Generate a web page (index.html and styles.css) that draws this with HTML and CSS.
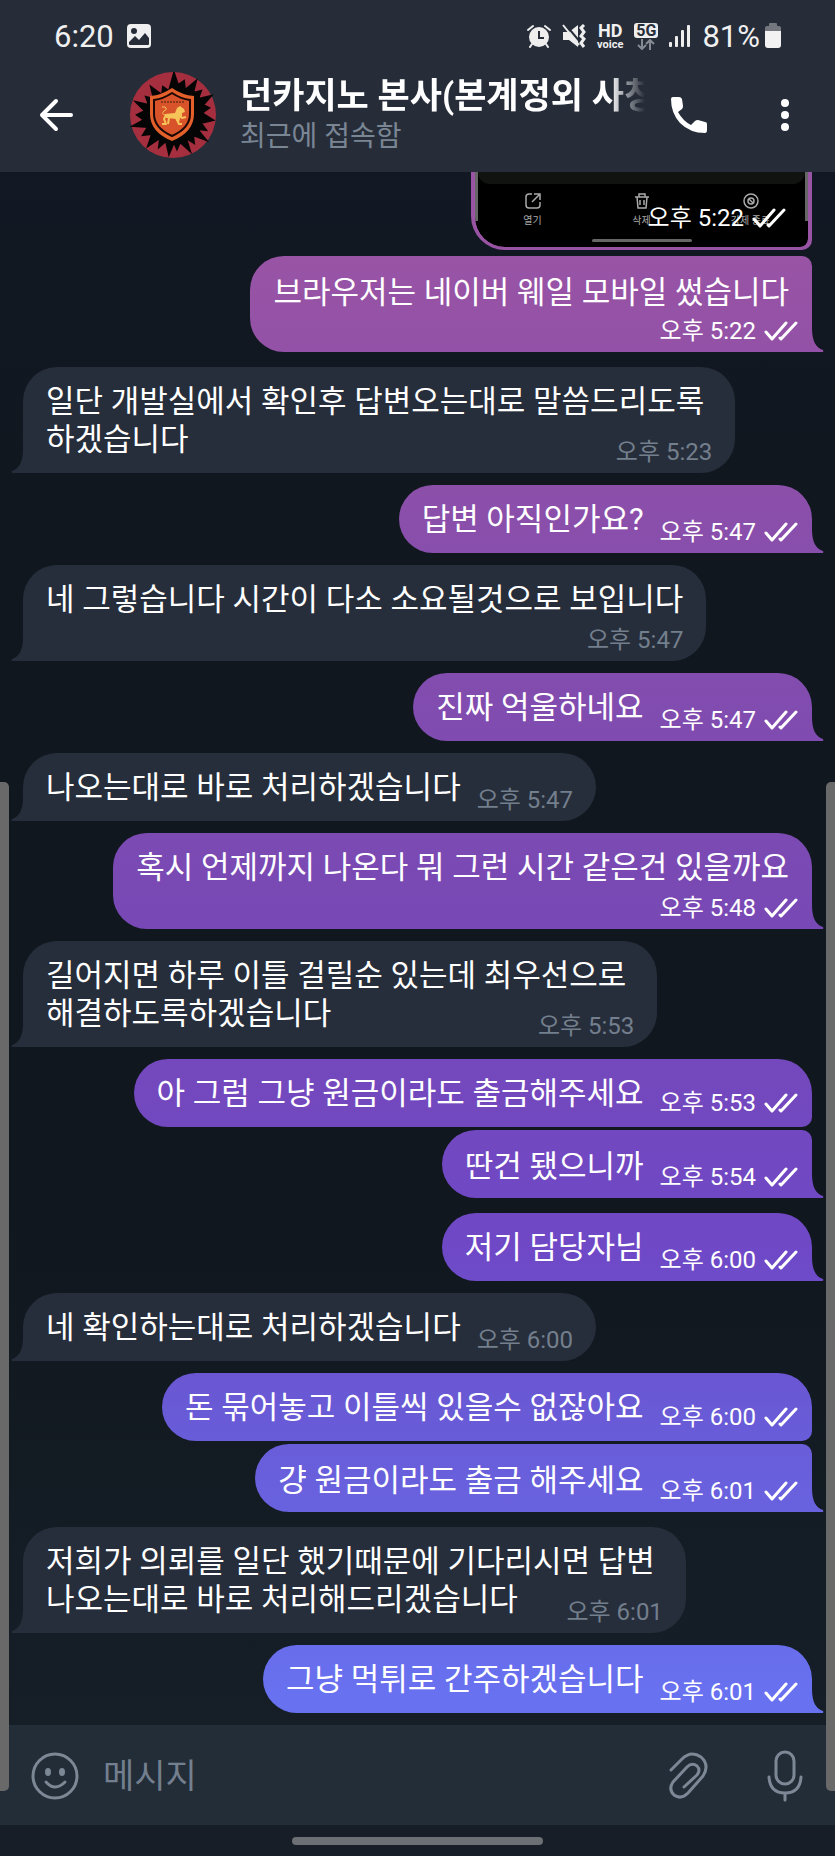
FILE: index.html
```
<!DOCTYPE html>
<html lang="ko">
<head>
    <meta charset="UTF-8">
    <meta name="viewport" content="width=device-width, initial-scale=1.0">
    <title>던카지노 본사</title>
    <link rel="stylesheet" href="styles.css">
</head>
<body>
    <svg class="sprite" aria-hidden="true">
        <symbol id="checks" viewBox="0 0 34 20">
            <path d="M2 11l6 7L22 2M16 17l1 1L32 2" fill="none" stroke="currentColor" stroke-width="3" stroke-linecap="round" stroke-linejoin="round"/>
        </symbol>
    </svg>

    <header class="header">
        <div class="status-bar">
            <div class="status-left">
                <span>6:20</span>
                <svg width="26" height="26" viewBox="0 0 26 26">
                    <rect x="1" y="1" width="24" height="24" rx="4" fill="#f0f0f0"/>
                    <circle cx="8" cy="8" r="3" fill="#262d39"/>
                    <path d="M3 19l6-6 4 4 6-7 4 5v6q0 1-1 1H4q-1 0-1-1z" fill="#262d39"/>
                </svg>
            </div>
            <div class="status-right">
                <svg width="24" height="24" viewBox="0 0 24 24">
                    <circle cx="12" cy="13" r="10" fill="#eee"/>
                    <path d="M5 20l-2 3M19 20l2 3M1 6l5-4M23 6l-5-4" stroke="#eee" stroke-width="2" stroke-linecap="round"/>
                    <path d="M12 7v7h5" fill="none" stroke="#262d39" stroke-width="2"/>
                </svg>
                <svg width="24" height="24" viewBox="0 0 24 24">
                    <path d="M1 8h6l9-7v22l-9-7H1z" fill="#eee"/>
                    <path d="M3 0l16 19" stroke="#262d39" stroke-width="2"/>
                    <path d="M1 1l16 20" stroke="#eee" stroke-width="2"/>
                    <path d="M22 1l-3 3 3 4-3 4 3 3-3 4 3 4" fill="none" stroke="#eee" stroke-width="3"/>
                </svg>
                <span class="hd-voice"><b>HD</b><small>voice</small></span>
                <span class="net">
                    <b>5G</b>
                    <svg width="18" height="11" viewBox="0 0 18 11">
                        <path d="M5 0v10M1 6l4 4 4-4M13 11V1M9 5l4-4 4 4" fill="none" stroke="#858a92" stroke-width="2"/>
                    </svg>
                </span>
                <svg width="22" height="24" viewBox="0 0 22 24" fill="#eee">
                    <rect x="0" y="18" width="3" height="5" rx="1"/>
                    <rect x="6" y="12" width="3" height="11" rx="1"/>
                    <rect x="12" y="6" width="3" height="17" rx="1"/>
                    <rect x="18" y="1" width="3" height="22" rx="1"/>
                </svg>
                <span class="battery">81%
                    <svg width="18" height="26" viewBox="0 0 18 26">
                        <path d="M5 3V1q0-1 1-1h6q1 0 1 1v2h2q2 0 2 2v4H1V5q0-2 2-2z" fill="#74787e"/>
                        <path d="M1 8h16v14q0 3-3 3H4q-3 0-3-3z" fill="#f2f2f2"/>
                    </svg>
                </span>
            </div>
        </div>

        <div class="chat-bar">
            <button class="icon-btn back" aria-label="뒤로">
                <svg width="34" height="34" viewBox="0 0 34 34" fill="none" stroke="#fff" stroke-width="4" stroke-linecap="round" stroke-linejoin="round">
                    <path d="M17 3L3 17l14 14M3 17h29"/>
                </svg>
            </button>
            <svg class="avatar" viewBox="0 0 86 86">
                <circle cx="43" cy="43" r="43" fill="#a52f3e"/>
                <path d="M44 1l4 12 6-4 1 9 11-9-3 12 8-2-3 8 13-3-8 9 6 3-7 5 11 7-12 3 5 7-9-1 9 11-13-5 1 8-8-5 4 13-10-9-3 7-3-7-5 12-3-13-7 6 1-9-12 8 4-12-9 1 5-8-15-1 11-6-7-5 8-4-9-9 13 3-3-8 8 2-3-12 11 8 1-8 6 4z" fill="#050505" stroke="#050505" stroke-width="2"/>
                <path d="M42 16q10 7 22 8v18q0 18-22 27Q20 60 20 42V24q12-1 22-8z" fill="#e4602b"/>
                <path d="M42 21q9 6 18 7v14q0 14-18 22-18-8-18-22V28q9-1 18-7z" fill="#d8522a" stroke="#1b0705" stroke-width="2"/>
                <path d="M38 43l8 1 3 3-1 3M36 43l-2 4 2 5h-4M39 46l-1 6M46 46l3 6h3M49 43l3 3 4-1" fill="none" stroke="#f6c458" stroke-width="2" stroke-linejoin="round"/>
                <path d="M35 42l10-1 2-5 3-2 4 3 1 3-3 1v4l-5 2-11-1z" fill="#f6c458"/>
                <path d="M35 43q-4-1-1-4 4-2 1-4h-3" fill="none" stroke="#f6c458" stroke-width="1"/>
                <path d="M31 30h24" stroke="#8c371a" stroke-width="2" stroke-dasharray="2 1"/>
            </svg>
            <div class="peer">
                <h1 class="peer-name">던카지노 본사(본계정외 사칭</h1>
                <p class="peer-status">최근에 접속함</p>
            </div>
            <button class="icon-btn" aria-label="전화">
                <svg width="38" height="38" viewBox="0 0 38 38">
                    <path d="M1 3q0-2 2-2h6q2 0 3 2l1 7q0 2-1 3l-4 3q5 9 13 13l4-4q1-1 3-1l7 2q2 0 2 2v6q0 3-2 3Q20 37 10 27 1 17 1 3z" fill="#fff"/>
                </svg>
            </button>
            <button class="icon-btn more" aria-label="더보기">
                <svg width="10" height="34" viewBox="0 0 10 34" fill="#fff">
                    <circle cx="5" cy="5" r="4"/><circle cx="5" cy="17" r="4"/><circle cx="5" cy="29" r="4"/>
                </svg>
            </button>
        </div>
    </header>

    <main class="messages">
        <div class="msg out photo">
            <div class="photo-view">
                <div class="photo-sheet"></div>
                <div class="photo-actions">
                    <span>
                        <svg width="16" height="16" viewBox="0 0 16 16" fill="none" stroke="#aaa" stroke-width="1.5"><path d="M7 1H4Q1 1 1 4v8q0 3 3 3h8q3 0 3-3V9M7 9l7-7M9 1h6v6"/></svg>
                        열기
                    </span>
                    <span>
                        <svg width="16" height="16" viewBox="0 0 16 16" fill="none" stroke="#aaa" stroke-width="1.5"><path d="M1 4h14M5 4V1h6v3M3 4l1 11h8l1-11M6 7v5M10 7v5"/></svg>
                        삭제
                    </span>
                    <span>
                        <svg width="16" height="16" viewBox="0 0 16 16" fill="none" stroke="#aaa" stroke-width="1.5"><circle cx="8" cy="8" r="7"/><circle cx="8" cy="8" r="3"/><path d="M6 6l4 4"/></svg>
                        강제 종료
                    </span>
                </div>
                <div class="photo-home"></div>
            </div>
            <span class="time">오후 5:22 <svg class="checks"><use href="#checks"/></svg></span>
        </div>
        <div class="msg out below last-of-group tail">
            <p>브라우저는 네이버 웨일 모바일 썼습니다</p>
            <span class="time">오후 5:22 <svg class="checks"><use href="#checks"/></svg></span>
        </div>
        <div class="msg in over tail">
            <p>일단 개발실에서 확인후 답변오는대로 말씀드리도록<br>하겠습니다</p>
            <span class="time">오후 5:23</span>
        </div>
        <div class="msg out tail">
            <p>답변 아직인가요?</p>
            <span class="time">오후 5:47 <svg class="checks"><use href="#checks"/></svg></span>
        </div>
        <div class="msg in below tail">
            <p>네 그렇습니다 시간이 다소 소요될것으로 보입니다</p>
            <span class="time">오후 5:47</span>
        </div>
        <div class="msg out tail">
            <p>진짜 억울하네요</p>
            <span class="time">오후 5:47 <svg class="checks"><use href="#checks"/></svg></span>
        </div>
        <div class="msg in tail">
            <p>나오는대로 바로 처리하겠습니다</p>
            <span class="time">오후 5:47</span>
        </div>
        <div class="msg out below tail">
            <p>혹시 언제까지 나온다 뭐 그런 시간 같은건 있을까요</p>
            <span class="time">오후 5:48 <svg class="checks"><use href="#checks"/></svg></span>
        </div>
        <div class="msg in over tail">
            <p>길어지면 하루 이틀 걸릴순 있는데 최우선으로<br>해결하도록하겠습니다</p>
            <span class="time">오후 5:53</span>
        </div>
        <div class="msg out first-of-group">
            <p>아 그럼 그냥 원금이라도 출금해주세요</p>
            <span class="time">오후 5:53 <svg class="checks"><use href="#checks"/></svg></span>
        </div>
        <div class="msg out last-of-group tail">
            <p>딴건 됐으니까</p>
            <span class="time">오후 5:54 <svg class="checks"><use href="#checks"/></svg></span>
        </div>
        <div class="msg out tail">
            <p>저기 담당자님</p>
            <span class="time">오후 6:00 <svg class="checks"><use href="#checks"/></svg></span>
        </div>
        <div class="msg in tail">
            <p>네 확인하는대로 처리하겠습니다</p>
            <span class="time">오후 6:00</span>
        </div>
        <div class="msg out first-of-group">
            <p>돈 묶어놓고 이틀씩 있을수 없잖아요</p>
            <span class="time">오후 6:00 <svg class="checks"><use href="#checks"/></svg></span>
        </div>
        <div class="msg out last-of-group tail">
            <p>걍 원금이라도 출금 해주세요</p>
            <span class="time">오후 6:01 <svg class="checks"><use href="#checks"/></svg></span>
        </div>
        <div class="msg in over tail">
            <p>저희가 의뢰를 일단 했기때문에 기다리시면 답변<br>나오는대로 바로 처리해드리겠습니다</p>
            <span class="time">오후 6:01</span>
        </div>
        <div class="msg out tail">
            <p>그냥 먹튀로 간주하겠습니다</p>
            <span class="time">오후 6:01 <svg class="checks"><use href="#checks"/></svg></span>
        </div>
    </main>

    <form class="composer">
        <button type="button" class="icon-btn" aria-label="이모티콘">
            <svg width="48" height="48" viewBox="0 0 48 48" fill="none" stroke="#7d8896" stroke-width="3" stroke-linecap="round">
                <circle cx="24" cy="24" r="22"/>
                <path d="M15 30q9 10 19 0"/>
                <ellipse cx="17" cy="20" rx="3" ry="4" fill="#7d8896" stroke="none"/>
                <ellipse cx="31" cy="20" rx="3" ry="4" fill="#7d8896" stroke="none"/>
            </svg>
        </button>
        <input type="text" class="composer-input" placeholder="메시지" aria-label="메시지">
        <button type="button" class="icon-btn" aria-label="첨부">
            <svg width="42" height="48" viewBox="0 0 42 48" fill="none" stroke="#7d8896" stroke-width="3" stroke-linecap="round" stroke-linejoin="round">
                <path d="M3 18L14 7Q23-2 33 5q9 8 2 19L20 41q-7 7-14 2-6-6-1-13l14-15q5-5 10-1 4 4 0 9L16 35"/>
            </svg>
        </button>
        <button type="button" class="icon-btn mic" aria-label="음성 메시지">
            <svg width="38" height="52" viewBox="0 0 38 52" fill="none" stroke="#7d8896" stroke-width="3" stroke-linecap="round">
                <rect x="10" y="2" width="18" height="32" rx="9"/>
                <path d="M3 27q1 16 16 16t16-16M19 43v7"/>
            </svg>
        </button>
    </form>

    <footer class="nav-bar">
        <div class="home-handle"></div>
    </footer>

    <div class="edge-handle left"></div>
    <div class="edge-handle right"></div>
</body>
</html>
```
FILE: styles.css
```
* {
    box-sizing: border-box;
}

body {
    margin: 0;
    min-height: 100vh;
    display: flex;
    flex-direction: column;
    font-family: Roboto, "Noto Sans CJK KR", sans-serif;
    color: #fff;
    background: linear-gradient(#131926, #10171e 30%, #10171e 65%, #17202a);
}

h1,
p {
    margin: 0;
}

.sprite {
    display: none;
}

svg {
    flex: none;
}

/* header */

.header {
    height: 172px;
    flex: none;
    background: #262d39;
}

.status-bar {
    display: flex;
    justify-content: space-between;
    align-items: center;
    height: 72px;
    padding: 0 53px 0 54px;
    font-size: 31px;
    color: #f0f0f0;
}

.status-left,
.status-right,
.battery {
    display: flex;
    align-items: center;
}

.status-left {
    gap: 12px;
}

.status-right {
    gap: 11px;
}

.battery {
    gap: 4px;
}

.hd-voice,
.net {
    display: flex;
    flex-direction: column;
    align-items: center;
}

.hd-voice b {
    font-size: 18px;
    line-height: 16px;
}

.hd-voice small {
    font-size: 11px;
    line-height: 11px;
    font-weight: bold;
}

.net {
    gap: 1px;
}

.net b {
    padding: 0 2px;
    font-size: 16px;
    line-height: 15px;
    border-radius: 3px;
    color: #262d39;
    background: #eee;
}

.chat-bar {
    display: flex;
    align-items: center;
    height: 86px;
    padding: 0 45px 0 39px;
}

.icon-btn {
    display: flex;
    padding: 0;
    border: none;
    background: none;
    cursor: pointer;
}

.avatar {
    width: 86px;
    height: 86px;
    margin-left: 57px;
}

.peer {
    flex: 1;
    min-width: 0;
    margin: 0 25px 0 24px;
    padding-top: 4px;
}

.peer-name {
    font-size: 35px;
    line-height: 40px;
    font-weight: bold;
    white-space: nowrap;
    overflow: hidden;
    mask-image: linear-gradient(to left, transparent, #000 36px);
}

.peer-status {
    font-size: 28px;
    line-height: 40px;
    color: #7a8694;
}

.more {
    margin-left: 72px;
}

/* messages */

.messages {
    flex: 1;
    display: flex;
    flex-direction: column;
    align-items: flex-start;
    gap: 12px;
    padding: 0 23px 12px;
}

.msg {
    position: relative;
    display: flex;
    align-items: flex-end;
    gap: 16px;
    padding: 16px 23px 14px;
    border-radius: 34px;
}

.msg p {
    font-size: 31px;
    line-height: 38px;
    white-space: nowrap;
}

.msg.in {
    background: #272e3b;
    border-bottom-left-radius: 0;
}

.msg.out {
    align-self: flex-end;
    padding-right: 14px;
}

/* one gradient shared by every outgoing bubble, tied to the window */
.msg.out,
.msg.out.tail::after {
    background: linear-gradient(#9a54a4 12%, #8a4fab 28%, #7949b4 48%, #6f48c6 67%, #695ad6 76%, #6872f1 92%) fixed;
}

.msg.out.tail {
    border-bottom-right-radius: 0;
}

.msg.tail::after {
    content: "";
    position: absolute;
    bottom: 0;
    left: 100%;
    width: 12px;
    height: 24px;
    clip-path: path("M0 0C0 13 4 20 11 22Q12 24 10 24H0z");
}

.msg.in.tail::after {
    left: auto;
    right: 100%;
    background: #272e3b;
    clip-path: path("M12 0C12 13 8 20 1 22Q0 24 2 24H12z");
}

.time {
    display: flex;
    align-items: center;
    gap: 8px;
    height: 28px;
    margin-bottom: -7px;
    font-size: 24px;
    line-height: 28px;
    white-space: nowrap;
}

.msg.in .time {
    color: #737f8d;
}

.checks {
    width: 34px;
    height: 20px;
}

/* time on its own row */
.msg.below {
    flex-direction: column;
    gap: 7px;
}

.msg.below p {
    align-self: flex-start;
}

.msg.out.below p {
    margin-right: 9px;
}

/* time beside the short last line */
.msg.over {
    display: grid;
    padding-right: 23px;
}

.msg.over p,
.msg.over .time {
    grid-area: 1 / 1;
}

.msg.over p {
    padding-right: 8px;
}

.msg.over .time {
    place-self: end;
}

.msg.first-of-group {
    margin-bottom: -9px;
    border-bottom-right-radius: 10px;
}

.first-of-group .time {
    margin-bottom: -4px;
}

.msg.last-of-group {
    margin-bottom: 3px;
    padding-top: 18px;
    padding-bottom: 12px;
    border-top-right-radius: 10px;
}

.last-of-group .time {
    margin-bottom: -5px;
}

.last-of-group.below {
    gap: 5px;
}

/* forwarded screenshot, scrolled under the header */

.msg.photo {
    display: block;
    width: 341px;
    margin-bottom: -6px;
    padding: 0 4px 3px 4px;
    border-radius: 0 0 10px 34px;
}

.photo-view {
    display: flex;
    flex-direction: column;
    align-items: center;
    height: 75px;
    border: solid #666;
    border-width: 0 3px;
    border-radius: 0 0 8px 30px;
    border-image: linear-gradient(#666 64%, transparent 64%) 3;
    background: #000;
    clip-path: inset(0 round 0 0 8px 30px);
}

.photo-sheet {
    align-self: stretch;
    height: 12px;
    border-radius: 0 0 20px 20px;
    background: #101310;
}

.photo-actions {
    align-self: stretch;
    display: grid;
    grid-template-columns: 1fr 1fr 1fr;
    padding-top: 9px;
}

.photo-actions span {
    display: flex;
    flex-direction: column;
    align-items: center;
    gap: 5px;
    font-size: 10px;
    line-height: 14px;
    color: #aaa;
}

.photo-home {
    width: 100px;
    height: 3px;
    margin-top: 11px;
    border-radius: 2px;
    background: #666;
}

.msg.photo .time {
    position: absolute;
    right: 26px;
    bottom: 18px;
    margin: 0;
}

/* composer */

.composer {
    display: flex;
    align-items: center;
    height: 100px;
    flex: none;
    padding: 2px 31px 0 31px;
    background: #232d38;
}

.composer-input {
    flex: 1;
    min-width: 0;
    margin: 0 24px;
    padding: 0;
    border: none;
    outline: none;
    background: none;
    color: #fff;
    font-family: inherit;
    font-size: 34px;
    line-height: 44px;
}

.composer-input::placeholder {
    color: #737f8e;
    opacity: 1;
}

.mic {
    margin-left: 56px;
}

.nav-bar {
    display: flex;
    justify-content: center;
    height: 31px;
    flex: none;
    padding-top: 12px;
    background: #171e27;
}

.home-handle {
    width: 30%;
    height: 8px;
    border-radius: 4px;
    background: #6c7075;
}

.edge-handle {
    position: fixed;
    top: 782px;
    bottom: 65px;
    width: 9px;
    background: #696969;
}

.edge-handle.left {
    left: 0;
    border-radius: 0 5px 5px 0;
}

.edge-handle.right {
    right: 0;
    border-radius: 5px 0 0 5px;
}
```
